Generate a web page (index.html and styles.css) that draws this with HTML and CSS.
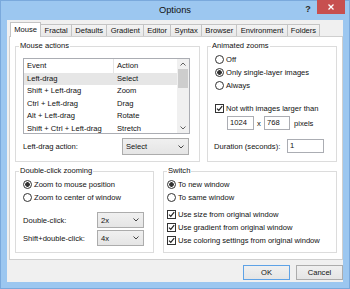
FILE: index.html
```html
<!DOCTYPE html>
<html lang="en">
<head>
    <meta charset="UTF-8">
    <meta name="viewport" content="width=device-width, initial-scale=1.0">
    <title>Options</title>
    <link rel="stylesheet" href="styles.css">
</head>
<body>
<div class="window">
    <div class="titlebar">
        <span class="title">Options</span>
        <span class="help">?</span>
        <span class="close">
            <svg width="6" height="6" viewBox="0 0 6 6"><path d="M0.5 0.5 L5.5 5.5 M5.5 0.5 L0.5 5.5" stroke="#fff" stroke-width="1.3"/></svg>
        </span>
    </div>

    <div class="content">
        <div class="tabs">
            <div class="tab active">Mouse</div>
            <div class="tab">Fractal</div>
            <div class="tab">Defaults</div>
            <div class="tab">Gradient</div>
            <div class="tab">Editor</div>
            <div class="tab">Syntax</div>
            <div class="tab">Browser</div>
            <div class="tab">Environment</div>
            <div class="tab">Folders</div>
        </div>

        <div class="panel">
            <div class="row row-top">
                <div class="group mouse-actions">
                    <span class="group-title">Mouse actions</span>
                    <div class="listbox">
                        <div class="list-rows">
                            <div class="list-row list-header"><span class="col-event">Event</span><span class="col-action">Action</span></div>
                            <div class="list-row selected"><span class="col-event">Left-drag</span><span class="col-action">Select</span></div>
                            <div class="list-row"><span class="col-event">Shift + Left-drag</span><span class="col-action">Zoom</span></div>
                            <div class="list-row"><span class="col-event">Ctrl + Left-drag</span><span class="col-action">Drag</span></div>
                            <div class="list-row"><span class="col-event">Alt + Left-drag</span><span class="col-action">Rotate</span></div>
                            <div class="list-row"><span class="col-event">Shift + Ctrl + Left-drag</span><span class="col-action">Stretch</span></div>
                        </div>
                        <div class="scrollbar">
                            <div class="arrow"><svg width="6" height="4" viewBox="0 0 6 4"><polyline points="0.5,3.5 3,1 5.5,3.5" fill="none" stroke="#606060" stroke-width="1"/></svg></div>
                            <div class="thumb"></div>
                            <div class="track"></div>
                            <div class="arrow"><svg width="6" height="4" viewBox="0 0 6 4"><polyline points="0.5,0.5 3,3 5.5,0.5" fill="none" stroke="#606060" stroke-width="1"/></svg></div>
                        </div>
                    </div>
                    <div class="field-row action-row">
                        <span class="field-label">Left-drag action:</span>
                        <div class="combo action-combo">
                            <span>Select</span>
                            <svg width="6" height="4" viewBox="0 0 6 4"><polyline points="0.5,0.5 3,3 5.5,0.5" fill="none" stroke="#444" stroke-width="1"/></svg>
                        </div>
                    </div>
                </div>

                <div class="group animated">
                    <span class="group-title">Animated zooms</span>
                    <div class="option"><span class="radio"></span>Off</div>
                    <div class="option"><span class="radio checked"></span>Only single-layer images</div>
                    <div class="option"><span class="radio"></span>Always</div>
                    <div class="option spaced"><span class="checkbox"><svg width="7" height="7" viewBox="0 0 7 7"><polyline points="1,3.6 2.8,5.4 6.2,1.2" fill="none" stroke="#222" stroke-width="1.2"/></svg></span>Not with images larger than</div>
                    <div class="size-row">
                        <div class="textbox size-w">1024</div>
                        <span class="times">x</span>
                        <div class="textbox size-h">768</div>
                        <span class="unit">pixels</span>
                    </div>
                    <div class="field-row duration-row">
                        <span class="duration-label">Duration (seconds):</span>
                        <div class="textbox duration">1</div>
                    </div>
                </div>
            </div>

            <div class="row row-bottom">
                <div class="group dblclick">
                    <span class="group-title">Double-click zooming</span>
                    <div class="option"><span class="radio checked"></span>Zoom to mouse position</div>
                    <div class="option"><span class="radio"></span>Zoom to center of window</div>
                    <div class="field-row zoom-row first">
                        <span class="zoom-label">Double-click:</span>
                        <div class="combo zoom-combo">
                            <span>2x</span>
                            <svg width="6" height="4" viewBox="0 0 6 4"><polyline points="0.5,0.5 3,3 5.5,0.5" fill="none" stroke="#444" stroke-width="1"/></svg>
                        </div>
                    </div>
                    <div class="field-row zoom-row">
                        <span class="zoom-label">Shift+double-click:</span>
                        <div class="combo zoom-combo">
                            <span>4x</span>
                            <svg width="6" height="4" viewBox="0 0 6 4"><polyline points="0.5,0.5 3,3 5.5,0.5" fill="none" stroke="#444" stroke-width="1"/></svg>
                        </div>
                    </div>
                </div>

                <div class="group switch">
                    <span class="group-title">Switch</span>
                    <div class="option"><span class="radio checked"></span>To new window</div>
                    <div class="option"><span class="radio"></span>To same window</div>
                    <div class="option first-check"><span class="checkbox"><svg width="7" height="7" viewBox="0 0 7 7"><polyline points="1,3.6 2.8,5.4 6.2,1.2" fill="none" stroke="#222" stroke-width="1.2"/></svg></span>Use size from original window</div>
                    <div class="option"><span class="checkbox"><svg width="7" height="7" viewBox="0 0 7 7"><polyline points="1,3.6 2.8,5.4 6.2,1.2" fill="none" stroke="#222" stroke-width="1.2"/></svg></span>Use gradient from original window</div>
                    <div class="option"><span class="checkbox"><svg width="7" height="7" viewBox="0 0 7 7"><polyline points="1,3.6 2.8,5.4 6.2,1.2" fill="none" stroke="#222" stroke-width="1.2"/></svg></span>Use coloring settings from original window</div>
                </div>
            </div>
        </div>

        <div class="buttons">
            <button class="default">OK</button>
            <button>Cancel</button>
        </div>
    </div>
</div>
</body>
</html>
```

FILE: styles.css
```css
body {
    margin: 0;
    font-family: "Liberation Sans", Arial, sans-serif;
    font-size: 7.6px;
    color: #111;
}
.window {
    width: 350px;
    height: 289px;
    box-sizing: border-box;
    background-color: #9cc7f0;
    border: 1px solid #7aa9dc;
}
.titlebar {
    display: flex;
    height: 19px;
}
.title {
    flex: 1;
    padding-left: 47px;
    text-align: center;
    line-height: 19px;
    font-size: 9.3px;
}
.help {
    width: 12px;
    margin-right: 3px;
    text-align: center;
    font-weight: bold;
    font-size: 9px;
    line-height: 16px;
    color: #2b2b2b;
}
.close {
    width: 28px;
    height: 14px;
    margin-top: -1px;
    margin-right: 4px;
    background-color: #c75050;
    display: flex;
    align-items: center;
    justify-content: center;
}

.content {
    margin: 0 6px;
    height: 262px;
    box-sizing: border-box;
    padding-top: 2px;
    background-color: #f0f0f0;
}
.tabs {
    display: flex;
    align-items: flex-end;
    height: 14px;
    margin-left: 3px;
}
.tab {
    box-sizing: border-box;
    height: 12px;
    line-height: 11px;
    padding: 0 3.25px;
    margin-right: -1px;
    border: 1px solid #c4c4c4;
    border-bottom: none;
    background: linear-gradient(#f3f3f3, #e8e8e8);
}
.tab.active {
    position: relative;
    z-index: 1;
    height: 15px;
    line-height: 13px;
    margin-bottom: -1px;
    background: #fff;
}
.panel {
    box-sizing: border-box;
    width: 334px;
    height: 224px;
    margin-left: 2px;
    padding: 9px 5px 0 5px;
    background-color: #fff;
    border: 1px solid #cfcfcf;
}
.row {
    display: flex;
}
.row-top {
    height: 116px;
    gap: 7px;
}
.row-bottom {
    height: 82px;
    margin-top: 9px;
    gap: 9px;
}
.group {
    position: relative;
    box-sizing: border-box;
    border: 1px solid #dcdcdc;
}
.group-title {
    position: absolute;
    top: -6px;
    left: 3px;
    padding: 0 1px;
    line-height: 10px;
    background-color: #fff;
}
.mouse-actions {
    width: 185px;
    padding: 11px 0 0 7px;
}
.animated {
    flex: 1;
    padding: 6px 7px 0 7px;
}
.dblclick {
    width: 139px;
    padding: 6px 7px 0 7px;
}
.switch {
    flex: 1;
    padding: 6px 3px 0 3px;
}

.listbox {
    display: flex;
    box-sizing: border-box;
    width: 167px;
    height: 76px;
    border: 1px solid #abadb3;
    overflow: hidden;
}
.list-rows {
    width: 153px;
}
.list-row {
    display: flex;
    height: 12.4px;
    line-height: 12.4px;
}
.list-header {
    height: 14px;
    line-height: 13px;
}
.list-row.selected {
    background-color: #e6e6e6;
}
.col-event {
    width: 87px;
    padding-left: 3px;
}
.list-header .col-event {
    border-right: 1px solid #e5e5e5;
    width: 86px;
}
.col-action {
    padding-left: 3px;
}
.scrollbar {
    display: flex;
    flex-direction: column;
    width: 12px;
    background-color: #f0f0f0;
}
.arrow {
    height: 10px;
    display: flex;
    align-items: center;
    justify-content: center;
}
.thumb {
    height: 19px;
    margin: 0 1px;
    background-color: #cdcdcd;
}
.track {
    flex: 1;
}

.field-row {
    display: flex;
    align-items: center;
}
.action-row {
    width: 166px;
    margin-top: 4px;
    justify-content: space-between;
}
.combo {
    display: flex;
    align-items: center;
    justify-content: space-between;
    box-sizing: border-box;
    padding: 0 4px 0 3px;
    border: 1px solid #acacac;
    background: linear-gradient(#f0f0f0, #e5e5e5);
}
.action-combo {
    width: 67px;
    height: 17px;
}
.zoom-combo {
    width: 47px;
    height: 16px;
}

.option {
    display: flex;
    align-items: center;
    gap: 2px;
    height: 13px;
}
.option.spaced {
    margin-top: 10px;
}
.option.first-check {
    margin-top: 4px;
}
.radio {
    box-sizing: border-box;
    width: 9px;
    height: 9px;
    border: 1px solid #333;
    border-radius: 50%;
    background-color: #fff;
}
.radio.checked {
    background: radial-gradient(circle, #333 0 2px, #fff 2.6px);
}
.checkbox {
    display: flex;
    align-items: center;
    justify-content: center;
    box-sizing: border-box;
    width: 9px;
    height: 9px;
    border: 1px solid #333;
    background-color: #fff;
}

.textbox {
    box-sizing: border-box;
    height: 14px;
    line-height: 12px;
    padding-left: 2px;
    border: 1px solid #abadb3;
    background-color: #fff;
}
.size-row {
    display: flex;
    align-items: center;
    margin-top: 1px;
    margin-left: 12px;
}
.size-w {
    width: 27px;
}
.size-h {
    width: 26px;
}
.times {
    width: 10px;
    text-align: center;
}
.unit {
    margin-left: 4px;
}
.duration-row {
    margin-top: 9px;
}
.duration-label {
    width: 73px;
    margin-left: -1px;
}
.duration {
    width: 37px;
}

.zoom-row {
    margin-top: 2px;
}
.zoom-row.first {
    margin-top: 8px;
}
.zoom-label {
    width: 74px;
}

.buttons {
    display: flex;
    justify-content: flex-end;
    gap: 6px;
    margin-top: 5px;
}
button {
    box-sizing: border-box;
    width: 47px;
    height: 15px;
    padding: 0;
    font-family: inherit;
    font-size: 7.6px;
    color: #111;
    border: 1px solid #acacac;
    background: linear-gradient(#f0f0f0, #e5e5e5);
}
button.default {
    border-color: #5ea2e6;
}
```
